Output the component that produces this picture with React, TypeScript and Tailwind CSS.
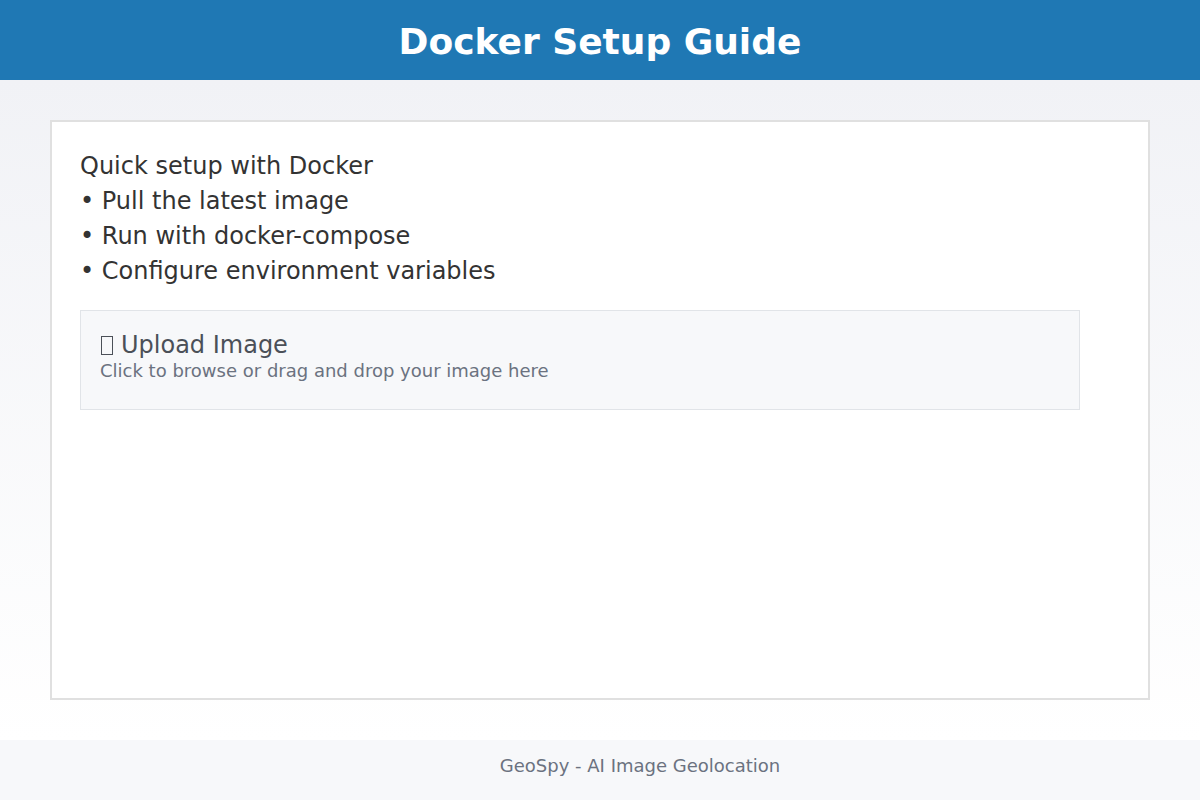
export default function App() {
  return (
    <div className="w-[1200px] h-[800px] flex flex-col" style={{ fontFamily: '"DejaVu Sans", sans-serif' }}>
      <header className="h-[80px] bg-[#1f78b4] flex items-center justify-center shrink-0">
        <h1 className="text-white font-bold text-[36px] leading-none pt-[4px]">Docker Setup Guide</h1>
      </header>
      <main className="flex-1 bg-gradient-to-b from-[#f1f2f6] to-[#ffffff] px-[50px] py-[40px] flex">
        <div className="flex-1 bg-white border-2 border-[#e0e0e0] px-[28px] pt-[27px]">
          <div className="text-[#333333] text-[24px] leading-[35px]">
            <p>Quick setup with Docker</p>
            <p>• Pull the latest image</p>
            <p>• Run with docker-compose</p>
            <p>• Configure environment variables</p>
          </div>
          <div className="mt-[21px] w-[1000px] h-[100px] bg-[#f7f8fa] border border-[#e1e4e8] px-[19px] pt-[19px]">
            <div className="text-[24px] leading-[30px] text-[#4b5058] flex items-center">
              <span className="inline-block w-[12px] h-[19px] border border-[#4b5058] mt-[1px] ml-[1px]" aria-hidden="true"></span>
              <span className="ml-[8px]">Upload Image</span>
            </div>
            <div className="text-[18px] leading-[22px] text-[#6b7280]">Click to browse or drag and drop your image here</div>
          </div>
        </div>
      </main>
      <footer className="h-[60px] bg-[#f7f8fa] flex items-center justify-center shrink-0 pl-[80px]">
        <span className="text-[18px] text-[#6b7280] leading-none pb-[8px]">GeoSpy - AI Image Geolocation</span>
      </footer>
    </div>
  );
}
